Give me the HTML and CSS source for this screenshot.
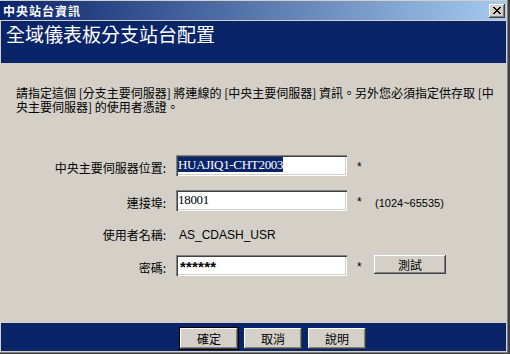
FILE: index.html
```html
<!DOCTYPE html>
<html lang="zh-Hant">
<head>
<meta charset="utf-8">
<title>中央站台資訊</title>
<link rel="stylesheet" href="styles.css">
</head>
<body>
<div class="window">
  <div class="titlebar">
    <span class="title">中央站台資訊</span>
    <span class="close" aria-label="關閉">
      <svg width="8" height="7" viewBox="0 0 8 7" shape-rendering="crispEdges"><path fill="#000" d="M0 0h2v1H0z M6 0h2v1H6z M1 1h2v1H1z M5 1h2v1H5z M2 2h4v1H2z M3 3h2v1H3z M2 4h4v1H2z M1 5h2v1H1z M5 5h2v1H5z M0 6h2v1H0z M6 6h2v1H6z"/></svg>
    </span>
  </div>
  <div class="header">全域儀表板分支站台配置</div>
  <div class="content">
    <p class="intro"><span class="line">請指定這個 [分支主要伺服器] 將連線的 [中央主要伺服器] 資訊。另外您必須指定供存取 [中</span><span class="line">央主要伺服器] 的使用者憑證。</span></p>
    <div class="form">
      <div class="row">
        <span class="lbl">中央主要伺服器位置:</span>
        <div class="field"><span class="sel">HUAJIQ1-CHT2003</span></div>
        <span class="req">*</span>
      </div>
      <div class="row">
        <span class="lbl">連接埠:</span>
        <div class="field">18001</div>
        <span class="req">*</span>
        <span class="hint">(1024~65535)</span>
      </div>
      <div class="row row-static">
        <span class="lbl">使用者名稱:</span>
        <span class="value">AS_CDASH_USR</span>
      </div>
      <div class="row">
        <span class="lbl">密碼:</span>
        <div class="field field-pw">******</div>
        <span class="req">*</span>
        <button class="btn btn-test">測試</button>
      </div>
    </div>
  </div>
  <div class="footer">
    <button class="btn btn-default">確定</button>
    <button class="btn">取消</button>
    <button class="btn">說明</button>
  </div>
</div>
</body>
</html>
```

FILE: styles.css
```css
html, body {
  margin: 0;
  padding: 0;
}
body {
  width: 510px;
  height: 354px;
  overflow: hidden;
  background: #d4d0c8;
  font-family: "Noto Sans CJK TC", "Liberation Sans", sans-serif;
  font-size: 12px;
  color: #000;
}
.window {
  box-sizing: border-box;
  width: 510px;
  height: 354px;
  padding: 1px 4px 3px 1px;
  display: flex;
  flex-direction: column;
  background: #d4d0c8;
  box-shadow: inset -2px 0 #404040, inset 0 -1px #404040, inset -3px 0 #808080, inset 0 -2px #808080;
}
.titlebar {
  height: 19px;
  flex: none;
  display: flex;
  align-items: center;
  justify-content: space-between;
  margin-left: -1px;
  padding: 0 1px 0 3px;
  margin-bottom: 1px;
  background: linear-gradient(to right, #0a246a, #a6caf0);
}
.title {
  color: #fff;
  font-weight: bold;
  font-size: 12px;
  letter-spacing: 1px;
  line-height: 19px;
}
.close {
  box-sizing: border-box;
  width: 16px;
  height: 14px;
  margin-top: 1px;
  padding: 3px 0 0 4px;
  display: block;
  background: #d4d0c8;
  box-shadow: inset -1px -1px #404040, inset 1px 1px #fff, inset -2px -2px #808080;
}
.close svg {
  display: block;
}
.header {
  box-sizing: border-box;
  height: 42px;
  flex: none;
  padding: 3px 0 0 5px;
  background: #0a246a;
  color: #fff;
  font-size: 19px;
  line-height: 19px;
}
.content {
  flex: 1;
  padding-top: 23px;
}
.intro {
  margin: 0 0 0 15px;
  line-height: 14px;
}
.line {
  display: block;
  height: 14px;
  white-space: nowrap;
}
.form {
  margin-top: 41px;
  display: flex;
  flex-direction: column;
  gap: 14px;
}
.row {
  display: flex;
  height: 21px;
}
.row-static {
  margin-top: -3px;
  margin-bottom: -2px;
}
.lbl {
  width: 165px;
  margin-right: 10px;
  padding-top: 7px;
  text-align: right;
  line-height: 12px;
}
.field {
  box-sizing: border-box;
  width: 171px;
  height: 21px;
  padding: 2px 2px 0 2px;
  background: #fff;
  box-shadow: inset 1px 1px #808080, inset 2px 2px #404040, inset -1px -1px #fff, inset -2px -2px #d4d0c8;
  font-family: "Liberation Serif", serif;
  font-size: 13px;
  line-height: 15px;
  letter-spacing: -0.3px;
  white-space: nowrap;
  overflow: hidden;
}
.sel {
  display: inline-block;
  background: #0a246a;
  color: #fff;
}
.field-pw {
  padding: 4px 2px 0 4px;
  font-family: "Liberation Sans", sans-serif;
  font-weight: bold;
  font-size: 15px;
  letter-spacing: 0.2px;
  line-height: 15px;
}
.req {
  box-sizing: border-box;
  width: 27px;
  flex: none;
  padding: 6px 0 0 10px;
  font-family: "Liberation Sans", sans-serif;
  font-size: 12px;
  line-height: 12px;
}
.hint {
  margin-left: 1px;
  padding-top: 7px;
  font-family: "Liberation Sans", sans-serif;
  font-size: 11px;
  line-height: 12px;
}
.value {
  margin-left: 3px;
  padding-top: 7px;
  font-family: "Liberation Sans", sans-serif;
  font-size: 12px;
  line-height: 12px;
}
.btn {
  box-sizing: border-box;
  width: 58px;
  height: 21px;
  padding: 0;
  border: none;
  background: #d4d0c8;
  box-shadow: inset -1px -1px #404040, inset 1px 1px #fff, inset -2px -2px #808080;
  font-family: "Noto Sans CJK TC", sans-serif;
  font-size: 12px;
  line-height: 12px;
  color: #000;
}
.btn-test {
  width: 72px;
  height: 19px;
}
.btn-default {
  outline: 1px solid #000;
}
.footer {
  box-sizing: border-box;
  height: 28px;
  flex: none;
  display: flex;
  gap: 6px;
  padding: 5px 0 0 179px;
  background: #0a246a;
}
```
